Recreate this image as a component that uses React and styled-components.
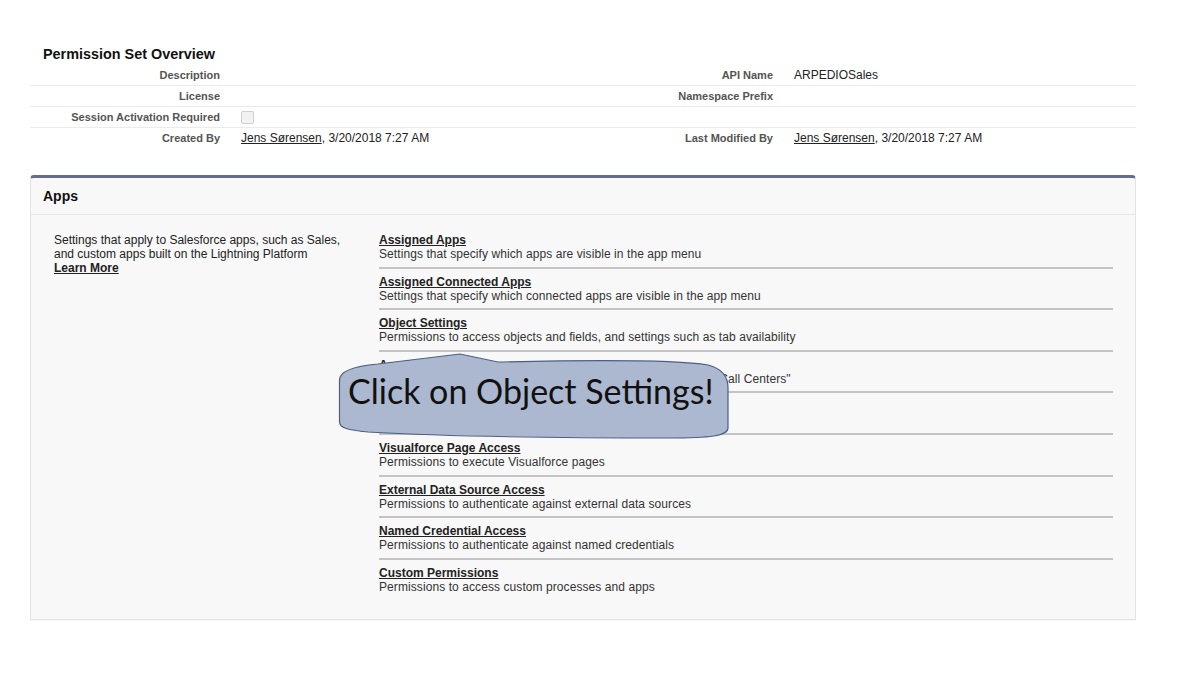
import React from 'react'
import styled, { createGlobalStyle } from 'styled-components'

const GlobalStyle = createGlobalStyle`
  body {
    margin: 0;
    background: #ffffff;
    font-family: "Liberation Sans", Arial, sans-serif;
    color: #222;
  }
`

const Page = styled.div`
  position: relative;
  width: 1200px;
  height: 675px;
  padding-top: 45px;
  box-sizing: border-box;
`

const Overview = styled.section`
  width: 1106px;
  margin-left: 30px;
`

const Title = styled.h2`
  margin: 0 0 2px;
  padding-left: 13px;
  font-size: 14.4px;
  line-height: 18px;
  font-weight: bold;
  color: #111;
`

const DetailRow = styled.div`
  display: grid;
  grid-template-columns: 200px 353px 200px 353px;
  border-bottom: ${(p) => (p.$last ? 'none' : '1px solid #ebebeb')};
  height: ${(p) => (p.$last ? '21px' : '20px')};
`

const Label = styled.div`
  text-align: right;
  padding-right: 10px;
  font-size: 11px;
  font-weight: bold;
  line-height: 20px;
  color: #545454;
`

const Value = styled.div`
  padding-left: 11px;
  font-size: 12px;
  line-height: 21px;
  color: #222;
  display: flex;
  align-items: center;
`

const UserLink = styled.a`
  color: #222;
  text-decoration: underline;
`

const Checkbox = styled.span`
  display: inline-block;
  width: 11px;
  height: 11px;
  border: 1px solid #cfcfcf;
  border-radius: 2px;
  background: #f2f2f2;
`

const Panel = styled.section`
  width: 1106px;
  box-sizing: border-box;
  margin: 26px 0 0 30px;
  background: #f8f8f8;
  border: 1px solid #e3e3e3;
  border-top: 3px solid #646e8a;
  border-radius: 4px 4px 0 0;
  box-shadow: 0 1px 1px rgba(0, 0, 0, 0.04);
`

const PanelHeader = styled.div`
  height: 36px;
  padding-left: 12px;
  display: flex;
  align-items: center;
  font-size: 14px;
  font-weight: bold;
  color: #111;
  border-bottom: 1px solid #e6e6e6;
`

const PanelBody = styled.div`
  display: grid;
  grid-template-columns: 325px 1fr;
  padding: 12px 22px 20px 23px;
`

const Intro = styled.p`
  margin: 0;
  padding-top: 6px;
  font-size: 12px;
  line-height: 14px;
  color: #222;
`

const LearnMore = styled.a`
  display: block;
  font-weight: bold;
  color: #222;
  text-decoration: underline;
`

const List = styled.ul`
  list-style: none;
  margin: 0;
  padding: 0;
`

const Item = styled.li`
  padding: 6px 0 5.6px;
  border-bottom: 2px solid #c4c4c4;
  &:last-child {
    border-bottom: none;
  }
`

const ItemTitle = styled.a`
  display: block;
  font-size: 12px;
  line-height: 14px;
  font-weight: bold;
  color: #222;
  text-decoration: underline;
`

const ItemDesc = styled.div`
  font-size: 12px;
  line-height: 14px;
  letter-spacing: 0.08px;
  color: #333;
`

const Callout = styled.div`
  position: absolute;
  left: 338px;
  top: 352px;
  width: 392px;
  height: 90px;
`

const CalloutShape = styled.svg`
  position: absolute;
  inset: 0;
`

const CalloutText = styled.div`
  position: relative;
  padding: 17px 0 0 10px;
  font-family: Lato, "Open Sans", sans-serif;
  font-size: 34px;
  line-height: 44px;
  color: #111;
  white-space: nowrap;
`

const details = [
  { l1: 'Description', v1: '', l2: 'API Name', v2: 'ARPEDIOSales' },
  { l1: 'License', v1: '', l2: 'Namespace Prefix', v2: '' },
  { l1: 'Session Activation Required', v1: 'checkbox', l2: '', v2: '' },
  { l1: 'Created By', v1: 'user', l2: 'Last Modified By', v2: 'user' },
]

const items = [
  ['Assigned Apps', 'Settings that specify which apps are visible in the app menu'],
  ['Assigned Connected Apps', 'Settings that specify which connected apps are visible in the app menu'],
  ['Object Settings', 'Permissions to access objects and fields, and settings such as tab availability'],
  ['App Permissions', 'Permissions to perform app-specific actions, such as "Transfer Call Centers"'],
  ['Apex Class Access', 'Permissions to execute Apex classes'],
  ['Visualforce Page Access', 'Permissions to execute Visualforce pages'],
  ['External Data Source Access', 'Permissions to authenticate against external data sources'],
  ['Named Credential Access', 'Permissions to authenticate against named credentials'],
  ['Custom Permissions', 'Permissions to access custom processes and apps'],
]

const renderValue = (v) => {
  if (v === 'checkbox') return <Checkbox />
  if (v === 'user')
    return (
      <span>
        <UserLink>Jens Sørensen</UserLink>, 3/20/2018 7:27 AM
      </span>
    )
  return v
}

const App = () => {
  return (
    <>
      <GlobalStyle />
      <Page>
        <Overview>
          <Title>Permission Set Overview</Title>
          {details.map((d, i) => (
            <DetailRow key={d.l1} $last={i === details.length - 1}>
              <Label>{d.l1}</Label>
              <Value>{renderValue(d.v1)}</Value>
              <Label>{d.l2}</Label>
              <Value>{renderValue(d.v2)}</Value>
            </DetailRow>
          ))}
        </Overview>

        <Panel>
          <PanelHeader>Apps</PanelHeader>
          <PanelBody>
            <Intro>
              Settings that apply to Salesforce apps, such as Sales,
              <br />
              and custom apps built on the Lightning Platform
              <LearnMore>Learn More</LearnMore>
            </Intro>
            <List>
              {items.map(([t, d]) => (
                <Item key={t}>
                  <ItemTitle>{t}</ItemTitle>
                  <ItemDesc>{d}</ItemDesc>
                </Item>
              ))}
            </List>
          </PanelBody>
        </Panel>

        <Callout>
          <CalloutShape width="392" height="90" viewBox="0 0 392 90">
            <path
              d="M 1.5 28 C 1.5 18, 18 14, 40 12 L 122 2 L 160 10 C 250 8, 340 8, 370 13 C 386 17, 390 26, 390 36 L 390 76 C 390 84, 372 86, 330 86 C 230 86, 100 84, 30 80 C 10 78, 1.5 76, 1.5 70 Z"
              fill="#abb8cf"
              stroke="#4b5f86"
              strokeWidth="1.2"
            />
          </CalloutShape>
          <CalloutText>Click on Object Settings!</CalloutText>
        </Callout>
      </Page>
    </>
  )
}

export default App
